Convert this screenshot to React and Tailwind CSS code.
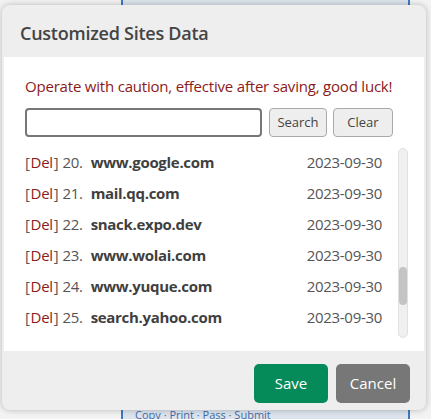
import React from "react";

const rows = [
  { n: 20, d: "www.google.com" },
  { n: 21, d: "mail.qq.com" },
  { n: 22, d: "snack.expo.dev" },
  { n: 23, d: "www.wolai.com" },
  { n: 24, d: "www.yuque.com" },
  { n: 25, d: "search.yahoo.com" },
];

export default function App() {
  return (
    <div
      className="relative w-[431px] h-[419px] overflow-hidden bg-[#f3f3f3]"
      style={{ fontFamily: '"Open Sans", "Noto Sans", sans-serif' }}
    >
      {/* background page */}
      <div className="ml-[121px] w-[289px] h-[419px] border-x-2 border-[#3f78c2] bg-[#dde3ec] flex flex-col justify-end">
        <div className="h-[9px] text-[11px] leading-[9px] text-[#3f6ea8] px-3 whitespace-nowrap overflow-hidden">
          Copy · Print · Pass · Submit
        </div>
      </div>

      {/* dialog */}
      <div className="absolute left-[2px] top-[5px] w-[424px] h-[405px] rounded-[8px] bg-[#eeeeee] shadow-[0_0_6px_rgba(0,0,0,0.25)] flex flex-col">
        <div className="h-[52px] flex items-center pl-[18px] pt-[4px] text-[18px] font-semibold text-[#444] tracking-[-0.25px]">
          Customized Sites Data
        </div>
        <div className="mx-[2px] h-[294px] bg-white pl-[21px] pr-[16px] pt-[19px]">
          <div className="text-[15px] leading-[20px] text-[#8b1a1a] tracking-[-0.2px]">
            Operate with caution, effective after saving, good luck!
          </div>
          <div className="mt-[12px] flex items-center">
            <input className="w-[237px] h-[29px] border-2 border-[#777] rounded-[4px] outline-none" />
            <button className="w-[58px] h-[29px] ml-[7px] border border-[#aaa] rounded-[4px] bg-[#eeeeee] text-[13px] text-[#444]">
              Search
            </button>
            <button className="w-[60px] h-[29px] ml-[6px] border border-[#aaa] rounded-[4px] bg-[#eeeeee] text-[13px] text-[#444]">
              Clear
            </button>
          </div>
          <div className="mt-[10px] flex">
            <div className="flex-1 flex flex-col">
              {rows.map((r) => (
                <div key={r.n} className="h-[31px] flex items-center text-[15px] text-[#555] pr-[16px] tracking-[-0.3px]">
                  <span>[</span>
                  <span className="text-[#8b1a1a] ml-[1px]">Del</span>
                  <span className="ml-[1px]">]</span>
                  <span className="ml-[4px]">{r.n}.</span>
                  <span className="ml-[8px] font-bold text-[#3f3f3f]">{r.d}</span>
                  <span className="ml-auto text-[#555]">2023-09-30</span>
                </div>
              ))}
            </div>
            <div className="w-[10px] h-[190px] mt-[1px] rounded-[5px] bg-[#f0f0f0] border border-[#e0e0e0] flex flex-col">
              <div className="mt-[118px] h-[38px] rounded-[5px] bg-[#c4c4c4]" />
            </div>
          </div>
        </div>
        <div className="flex-1 flex items-center justify-end gap-[8px] pr-[16px] pt-[5px]">
          <button className="w-[74px] h-[39px] rounded-[5px] bg-[#058b59] text-white text-[15px]">Save</button>
          <button className="w-[74px] h-[39px] rounded-[5px] bg-[#777777] text-white text-[15px]">Cancel</button>
        </div>
      </div>
    </div>
  );
}
